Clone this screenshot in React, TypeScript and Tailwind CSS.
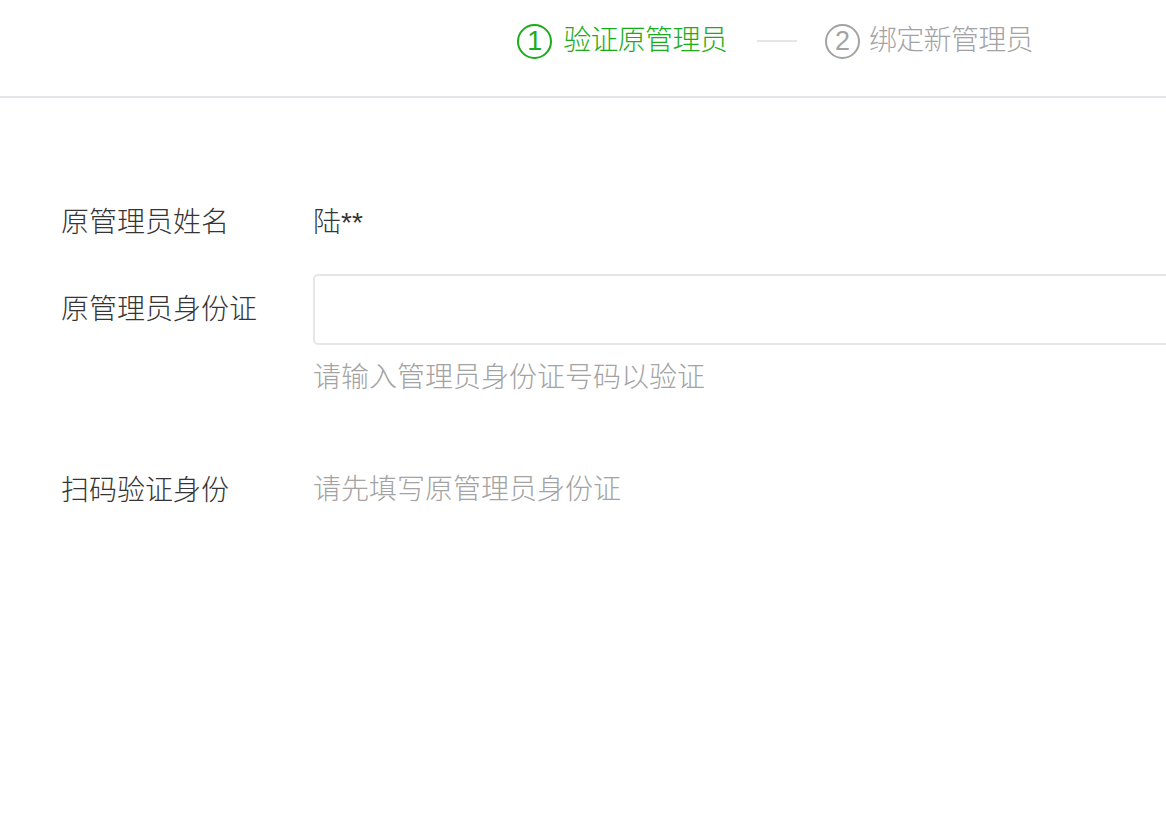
import React from "react";

function StepCircle({ n, active }: { n: number; active: boolean }) {
  return (
    <span
      className={
        "flex h-[35px] w-[35px] shrink-0 items-center justify-center rounded-full border-2 text-[27px] leading-none " +
        (active ? "border-[#1aad19] text-[#1aad19]" : "border-[#a3a3a3] text-[#a3a3a3]")
      }
      style={{ fontFamily: '"Liberation Sans", sans-serif' }}
    >
      {n}
    </span>
  );
}

export default function App() {
  return (
    <div
      className="h-[840px] w-[1166px] overflow-hidden bg-white font-light"
      style={{ fontFamily: '"Liberation Sans", "Noto Sans CJK SC", sans-serif' }}
    >
      <div className="w-[1550px]">
        <div className="h-[98px] border-b-2 border-[#e6e6ea] pt-[21px]">
          <div className="flex h-[40px] items-center justify-center text-[28px]">
            <div className="flex items-center gap-[11px] text-[#1aad19]">
              <StepCircle n={1} active />
              <span className="tracking-[-0.7px]">验证原管理员</span>
            </div>
            <div className="ml-[30px] mr-[28px] h-[2px] w-[40px] bg-[#e6e6ea]" />
            <div className="flex items-center gap-[9px] text-[#a3a3a3]">
              <StepCircle n={2} active={false} />
              <span className="tracking-[-0.7px]">绑定新管理员</span>
            </div>
          </div>
        </div>

        <div className="pl-[61px] pt-[105px] text-[28px] text-[#353535]">
          <div className="flex h-[40px] items-center leading-[40px]">
            <div className="w-[252px]">原管理员姓名</div>
            <div>陆**</div>
          </div>

          <div className="mt-[31px] flex items-center">
            <div className="w-[252px] leading-[40px]">原管理员身份证</div>
            <div className="h-[71px] w-[1100px] rounded-[5px] border-2 border-[#e6e6ea]" />
          </div>
          <div className="mt-[13px] pl-[252px] leading-[40px] text-[#a3a3a3]">
            请输入管理员身份证号码以验证
          </div>

          <div className="mt-[71px] flex items-center leading-[40px]">
            <div className="w-[252px] pt-[2px]">扫码验证身份</div>
            <div className="text-[#a3a3a3]">请先填写原管理员身份证</div>
          </div>
        </div>
      </div>
    </div>
  );
}
